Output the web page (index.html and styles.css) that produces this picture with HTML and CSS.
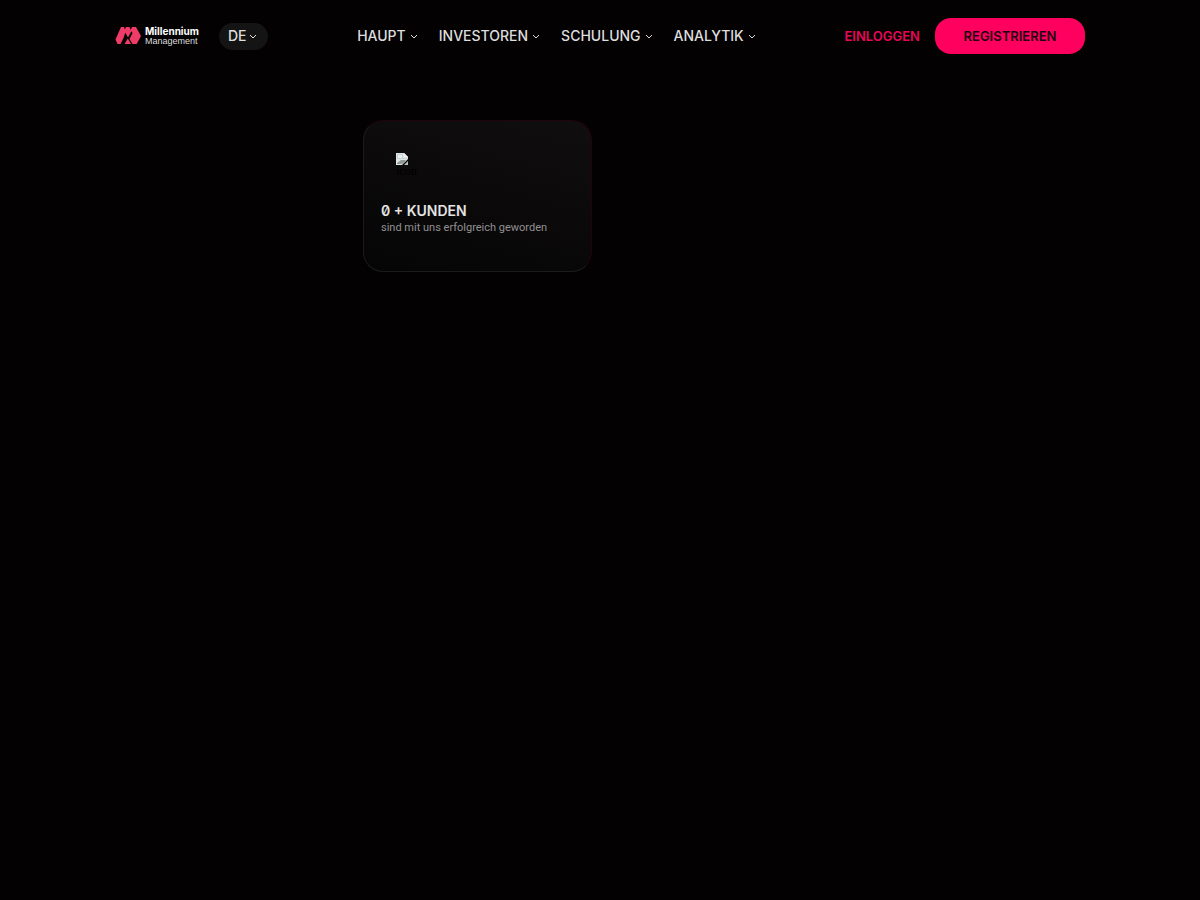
FILE: index.html
```html
<!DOCTYPE html>
<html lang="de">
<head>
<meta charset="utf-8">
<meta name="viewport" content="width=device-width, initial-scale=1">
<title>Millennium Management</title>
<link rel="stylesheet" href="styles.css">
</head>
<body>
<header class="header">
  <div class="brand">
    <a class="logo" href="#">
      <svg class="logo-mark" viewBox="0 0 26 18" aria-hidden="true">
        <path d="M6 0h3l1.700 4.500L8.500 11 5.500 17H2.500L0.500 12.500zM11 0h3.500l1.800 4.500-3.300 6-2.500-4.500L9.500 3.500zM17 0h4l5 9-4.300 8H17.500l-3-5L17.500 6 15.500 3zM12.800 11.500L16 17H9.500z"/>
      </svg>
      <span class="logo-text"><strong>Millennium</strong><span>Management</span></span>
    </a>
    <button class="language" type="button">DE
      <svg class="chevron" viewBox="0 0 8 5" aria-hidden="true"><path d="M1 1l3 3 3-3"/></svg>
    </button>
  </div>
  <nav class="nav">
    <button class="nav-item" type="button">HAUPT <svg class="chevron" viewBox="0 0 8 5" aria-hidden="true"><path d="M1 1l3 3 3-3"/></svg></button>
    <button class="nav-item" type="button">INVESTOREN <svg class="chevron" viewBox="0 0 8 5" aria-hidden="true"><path d="M1 1l3 3 3-3"/></svg></button>
    <button class="nav-item" type="button">SCHULUNG <svg class="chevron" viewBox="0 0 8 5" aria-hidden="true"><path d="M1 1l3 3 3-3"/></svg></button>
    <button class="nav-item" type="button">ANALYTIK <svg class="chevron" viewBox="0 0 8 5" aria-hidden="true"><path d="M1 1l3 3 3-3"/></svg></button>
  </nav>
  <div class="account">
    <a class="login" href="#">EINLOGGEN</a>
    <a class="register" href="#">REGISTRIEREN</a>
  </div>
</header>
<main class="content">
  <article class="card">
    <div class="card-icon">
      <svg class="card-image" viewBox="0 0 12 12" aria-hidden="true">
        <path fill="#dfe4e4" d="M0 0h8l4 4v2L6 12H0z"/>
        <path fill="#c3d3d6" d="M1 1h6v4h4v1H1z"/>
        <path fill="#e6eef0" d="M2 2h4v3H2z"/>
        <path fill="#8f9895" d="M1 10l4-3h4l1 1-4 3H1z"/>
        <path fill="#f4f4f4" d="M8 0l4 4H8z"/>
        <path fill="#b9bebe" d="M12 8v4H8z"/>
      </svg>
      <span>icon</span>
    </div>
    <h2 class="card-title">0 + KUNDEN</h2>
    <p class="card-text">sind mit uns erfolgreich geworden</p>
  </article>
</main>
</body>
</html>
```
FILE: styles.css
```css
* { box-sizing: border-box; }
body {
  margin: 0;
  min-height: 100vh;
  background: #030102;
  color: #dedede;
  font-family: Inter, "Liberation Sans", sans-serif;
}
a { color: inherit; text-decoration: none; }
button { border: 0; padding: 0; background: none; color: inherit; font: inherit; cursor: pointer; }
.header {
  display: flex;
  justify-content: space-between;
  align-items: center;
  max-width: 970px;
  margin: 0 auto;
  padding-top: 18px;
}
.brand { display: flex; align-items: center; gap: 20px; }
.logo { display: flex; align-items: center; gap: 4px; }
.logo-mark { width: 26px; height: 18px; fill: #ee3b67; }
.logo-text { display: flex; flex-direction: column; color: #fff; font-size: 10px; line-height: 10px; }
.logo-text span { color: #ddd; font: 9px/10px "Liberation Sans", sans-serif; }
.language {
  display: flex;
  align-items: center;
  gap: 3px;
  height: 27px;
  padding: 0 11px 0 9px;
  border-radius: 14px;
  background: #141414;
  font-size: 14px;
  line-height: 18px;
  font-weight: 500;
}
.chevron { width: 8px; height: 5px; fill: none; stroke: currentColor; stroke-width: 1; }
.nav { display: flex; gap: 21px; }
.nav-item { display: flex; align-items: center; gap: 4px; font-size: 14px; line-height: 18px; font-weight: 500; }
.account { display: flex; align-items: center; gap: 15px; font-size: 13px; line-height: 18px; font-weight: 600; }
.login { color: #e80659; }
.register {
  display: flex;
  align-items: center;
  justify-content: center;
  width: 150px;
  height: 36px;
  border-radius: 16px;
  background: #ff005f;
  color: #250010;
}
.content { max-width: 970px; margin: 0 auto; padding: 66px 0 0 248px; }
.card {
  width: 229px;
  padding: 32px 17px 35px;
  border: 1px solid;
  border-color: #20030f #20030f #1b1b1b #1b1b1b;
  border-radius: 20px;
  background: linear-gradient(195deg, #100e0f, #060506);
}
.card-icon {
  display: flex;
  flex-direction: column;
  padding-left: 15px;
  margin-bottom: 25px;
  color: #000;
  font: 12px/13px "Liberation Serif", serif;
}
.card-image { width: 12px; height: 12px; }
.card-title { margin: 0; color: #e4e4e4; font-size: 14px; line-height: 16px; font-weight: 600; font-feature-settings: "zero"; }
.card-text { margin: 0; color: #929092; font: 11px/17px Roboto, sans-serif; }
```
